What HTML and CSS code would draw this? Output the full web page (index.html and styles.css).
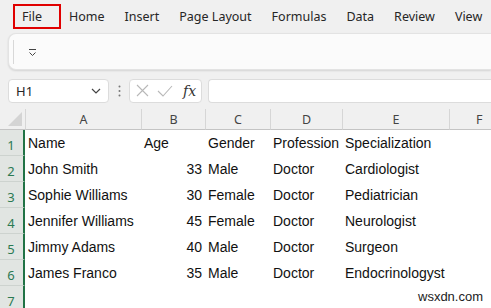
FILE: index.html
```html
<!DOCTYPE html>
<html>
<head>
<meta charset="utf-8">
<link rel="stylesheet" href="styles.css">
</head>
<body>
<div class="tabs">
  <span class="tab file">File</span>
  <span class="tab home">Home</span>
  <span class="tab">Insert</span>
  <span class="tab">Page Layout</span>
  <span class="tab">Formulas</span>
  <span class="tab">Data</span>
  <span class="tab">Review</span>
  <span class="tab">View</span>
</div>
<div class="ribbon">
  <span class="rsep"></span>
  <svg class="qat" width="9" height="9" viewBox="0 0 9 9"><path d="M1 1.5H8M1.5 4.5L4.5 7.5L7.5 4.5" fill="none" stroke="#444" stroke-width="1"/></svg>
</div>
<div class="fbar">
  <div class="namebox"><span>H1</span>
    <svg width="10" height="6" viewBox="0 0 10 6"><path d="M1 1L5 5L9 1" fill="none" stroke="#444" stroke-width="1.2"/></svg>
  </div>
  <svg class="dots" width="3" height="12" viewBox="0 0 3 12"><circle cx="1.5" cy="1.5" r="1" fill="#777"/><circle cx="1.5" cy="6" r="1" fill="#777"/><circle cx="1.5" cy="10.5" r="1" fill="#777"/></svg>
  <div class="fxbox">
    <svg width="13" height="13" viewBox="0 0 13 13"><path d="M1 1L12 12M12 1L1 12" stroke="#b8b8b8" stroke-width="1.1" fill="none"/></svg>
    <svg width="16" height="12" viewBox="0 0 16 12"><path d="M1 6L6 11L15 1" stroke="#b8b8b8" stroke-width="1.1" fill="none"/></svg>
    <span class="fx">fx</span>
  </div>
  <div class="finput"></div>
</div>
<div class="sheet">
  <div class="corner"><span class="tri"></span></div>
  <div class="ch">A</div><div class="ch">B</div><div class="ch">C</div><div class="ch">D</div><div class="ch">E</div><div class="ch last">F</div>

  <div class="rh">1</div><div class="c">Name</div><div class="c">Age</div><div class="c">Gender</div><div class="c">Profession</div><div class="c">Specialization</div><div class="c"></div>
  <div class="rh">2</div><div class="c">John Smith</div><div class="c n">33</div><div class="c">Male</div><div class="c">Doctor</div><div class="c">Cardiologist</div><div class="c"></div>
  <div class="rh">3</div><div class="c">Sophie Williams</div><div class="c n">30</div><div class="c">Female</div><div class="c">Doctor</div><div class="c">Pediatrician</div><div class="c"></div>
  <div class="rh">4</div><div class="c">Jennifer Williams</div><div class="c n">45</div><div class="c">Female</div><div class="c">Doctor</div><div class="c">Neurologist</div><div class="c"></div>
  <div class="rh">5</div><div class="c">Jimmy Adams</div><div class="c n">40</div><div class="c">Male</div><div class="c">Doctor</div><div class="c">Surgeon</div><div class="c"></div>
  <div class="rh">6</div><div class="c">James Franco</div><div class="c n">35</div><div class="c">Male</div><div class="c">Doctor</div><div class="c">Endocrinologyst</div><div class="c"></div>
  <div class="rh">7</div><div class="c"></div><div class="c"></div><div class="c"></div><div class="c"></div><div class="c"></div><div class="c"></div>
</div>
<div class="wm">wsxdn.com</div>
</body>
</html>
```
FILE: styles.css
```css
html, body { margin: 0; padding: 0; }
body {
  width: 491px; height: 308px; overflow: hidden;
  background: #f0f0f0;
  font-family: "Noto Sans", "Open Sans", sans-serif;
  color: #262626;
  position: relative;
}
.tabs {
  display: flex; align-items: center;
  height: 33px; padding-left: 13px;
  font-size: 12.5px; color: #262626;
  white-space: nowrap;
}
.tab { padding: 0 10px; line-height: 21px; flex-shrink: 0; }
.tab.file { border: 2px solid #e00000; padding: 0 17px 0 7px; }
.tab.home { margin-left: -2px; }
.ribbon {
  margin-left: 8px; height: 35px;
  background: #fbfbfb;
  border: 1px solid #e3e3e3; border-right: none;
  border-radius: 8px 0 0 8px;
  box-shadow: 0 1px 2px rgba(0,0,0,0.12);
  display: flex; align-items: center;
}
.rsep { width: 1px; height: 24px; background: #d8d8d8; margin-left: 4px; }
.qat { margin-left: 14px; margin-top: 2px; }
.fbar {
  display: flex; align-items: center;
  margin-top: 8px; height: 25px;
}
.namebox {
  margin-left: 8px; width: 101px; height: 24px; box-sizing: border-box;
  background: #fff; border: 1px solid #dcdcdc; border-radius: 4px;
  display: flex; align-items: center; justify-content: space-between;
  padding: 0 7px 0 7px; font-size: 13px; color: #262626;
}
.dots { margin-left: 9px; }
.fxbox {
  margin-left: 8px; width: 73px; height: 24px; box-sizing: border-box;
  background: #fff; border: 1px solid #dcdcdc; border-radius: 4px;
  display: flex; align-items: center; padding: 0 0 0 6px; gap: 8px;
}
.fx { font-family: "DejaVu Serif", "Liberation Serif", serif; font-style: italic; font-size: 14px; color: #333; margin-left: 2px; }
.finput {
  margin-left: 6px; flex: 1; height: 24px; box-sizing: border-box;
  background: #fff; border: 1px solid #dcdcdc; border-right: none; border-radius: 4px 0 0 4px;
}
.sheet {
  margin-top: 6px;
  display: grid;
  grid-template-columns: 25px 116px 64px 65px 72px 107px 1fr;
  grid-template-rows: 21px repeat(7, 26px);
  background: #fff;
  font-family: "Liberation Sans", Arial, sans-serif;
  font-size: 14px; color: #111;
}
.corner { background: #f0f0f0; border-bottom: 1px solid #c4c4c4; position: relative; }
.tri {
  position: absolute; right: 3px; bottom: 3px; width: 0; height: 0;
  border-left: 14px solid transparent; border-bottom: 14px solid #d4d4d4;
}
.ch {
  background: #f0f0f0; border-bottom: 1px solid #c4c4c4; border-left: 1px solid #d6d6d6;
  display: flex; align-items: center; justify-content: center;
  font-family: "Noto Sans", sans-serif; font-size: 12.5px; color: #444;
}
.ch.last { justify-content: flex-start; padding-left: 26px; }
.rh {
  background: #e1e5e2; border-right: 2px solid #217346; border-bottom: 1px solid #cdd3cf;
  box-sizing: border-box;
  display: flex; align-items: center; justify-content: center; padding-top: 4px; padding-right: 1px;
  font-family: "Noto Sans", sans-serif; font-size: 13px; color: #2b7a52;
}
.c { display: flex; align-items: center; padding: 0 3px; white-space: nowrap; overflow: visible; }
.c.n { justify-content: flex-end; }
.wm {
  position: absolute; left: 418px; top: 289px;
  font-family: "Liberation Sans", Arial, sans-serif; font-size: 13px; color: #222;
}
```
